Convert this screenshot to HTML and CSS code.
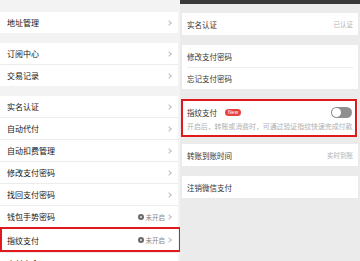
FILE: index.html
```html
<!DOCTYPE html>
<html lang="zh-CN">
<head>
    <meta charset="UTF-8">
    <meta name="viewport" content="width=device-width, initial-scale=1.0">
    <title>支付设置</title>
    <link rel="stylesheet" href="styles.css">
</head>
<body>
    <div class="screens">
        <!-- 左侧：钱包设置 -->
        <div class="panel panel-left">
            <div class="group">
                <div class="row"><span class="label">地址管理</span><span class="chev"></span></div>
            </div>
            <div class="group">
                <div class="row"><span class="label">订阅中心</span><span class="chev"></span></div>
                <div class="row"><span class="label">交易记录</span><span class="chev"></span></div>
            </div>
            <div class="group">
                <div class="row"><span class="label">实名认证</span><span class="chev"></span></div>
                <div class="row"><span class="label">自动代付</span><span class="chev"></span></div>
                <div class="row"><span class="label">自动扣费管理</span><span class="chev"></span></div>
                <div class="row"><span class="label">修改支付密码</span><span class="chev"></span></div>
                <div class="row"><span class="label">找回支付密码</span><span class="chev"></span></div>
                <div class="row">
                    <span class="label">钱包手势密码</span>
                    <span class="state"><i class="state-icon"></i>未开启</span>
                    <span class="chev"></span>
                </div>
                <div class="row row-marked">
                    <span class="label">指纹支付</span>
                    <span class="state"><i class="state-icon"></i>未开启</span>
                    <span class="chev"></span>
                </div>
                <div class="row"><span class="label">支付安全</span><span class="chev"></span></div>
            </div>
        </div>

        <!-- 右侧：支付管理 -->
        <div class="panel panel-right">
            <div class="topbar"></div>
            <div class="card">
                <div class="item"><span class="label">实名认证</span><span class="note">已认证</span></div>
            </div>
            <div class="card">
                <div class="item"><span class="label">修改支付密码</span></div>
                <div class="item"><span class="label">忘记支付密码</span></div>
            </div>
            <div class="card card-marked">
                <div class="finger">
                    <div class="finger-head">
                        <span class="label">指纹支付</span>
                        <span class="badge">New</span>
                        <span class="switch"><i class="knob"></i></span>
                    </div>
                    <div class="finger-desc">开启后，转账或消费时，可通过验证指纹快速完成付款</div>
                </div>
            </div>
            <div class="card">
                <div class="item"><span class="label">转账到账时间</span><span class="note">实时到账</span></div>
            </div>
            <div class="card">
                <div class="item"><span class="label">注销微信支付</span></div>
            </div>
        </div>
    </div>
</body>
</html>
```

FILE: styles.css
```css
* {
    box-sizing: border-box;
}

body {
    margin: 0;
    font-family: "Noto Sans CJK SC", "Noto Sans", sans-serif;
    background-color: #ebebeb;
    overflow: hidden;
}

.screens {
    display: flex;
    width: 360px;
    height: 261px;
}

.panel {
    width: 180px;
    height: 261px;
    overflow: hidden;
    flex-shrink: 0;
}

/* 左侧 */
.panel-left {
    background-color: #f3f3f3;
    padding-top: 12px;
}

.group {
    background-color: #fff;
    margin-bottom: 10px;
    width: 178px;
}

.row {
    display: flex;
    align-items: center;
    height: 22px;
    padding: 0 6px 0 7px;
    font-size: 8px;
    color: #151515;
    border-top: 1px solid #ececec;
    position: relative;
}

.row:first-child {
    height: 21px;
    border-top: none;
}

.row .label {
    flex: 1;
}

.chev {
    width: 4px;
    height: 4px;
    border-top: 1px solid #bdbdbd;
    border-right: 1px solid #bdbdbd;
    transform: rotate(45deg);
    margin-right: 1px;
}

.state {
    display: flex;
    align-items: center;
    font-size: 6.5px;
    color: #888;
    margin-right: 2px;
}

.state-icon {
    width: 6px;
    height: 6px;
    border-radius: 50%;
    border: 2px solid #6a6a6a;
    background-color: #e0e0e0;
    margin-right: 1.5px;
}

.row-marked {
    height: 25px;
}

.row-marked::after {
    content: "";
    position: absolute;
    left: 0;
    right: -3px;
    top: -1px;
    bottom: 0;
    border: 2px solid #e0191c;
}

/* 右侧 */
.panel-right {
    background-color: #ebebeb;
    padding: 0 2px;
}

.topbar {
    height: 4px;
    margin: 0 -2px 9px;
    background-color: #383838;
}

.card {
    background-color: #fff;
    margin-bottom: 10px;
}

.item {
    display: flex;
    align-items: center;
    justify-content: space-between;
    height: 22px;
    padding: 0 5px;
    font-size: 7.5px;
    color: #333;
    position: relative;
}

.item + .item::before {
    content: "";
    position: absolute;
    left: 5px;
    right: 5px;
    top: 0;
    border-top: 1px solid #ededed;
}

.note {
    font-size: 6.5px;
    color: #b3b3b3;
}

.card-marked {
    position: relative;
    margin-bottom: 7px;
}

.card-marked::after {
    content: "";
    position: absolute;
    left: -1px;
    right: 1px;
    top: 0;
    bottom: 0;
    border: 2px solid #e0191c;
}

.finger {
    height: 38px;
    padding: 7px 6px 0 5px;
}

.finger-head {
    display: flex;
    align-items: center;
    height: 12px;
    font-size: 7.5px;
    color: #333;
}

.badge {
    margin-left: 8px;
    background-color: #e64340;
    color: #fff;
    font-family: "Liberation Sans", Arial, sans-serif;
    font-size: 5px;
    line-height: 7px;
    height: 7px;
    padding: 0 3px;
    border-radius: 4px;
}

.switch {
    margin-left: auto;
    width: 21px;
    height: 11px;
    border-radius: 6px;
    background-color: #8f8f8f;
    padding: 1px;
    display: flex;
}

.knob {
    width: 9px;
    height: 9px;
    border-radius: 50%;
    background-color: #fff;
}

.finger-desc {
    margin-top: 3px;
    font-size: 6.9px;
    color: #b0b0b0;
    white-space: nowrap;
}
```
